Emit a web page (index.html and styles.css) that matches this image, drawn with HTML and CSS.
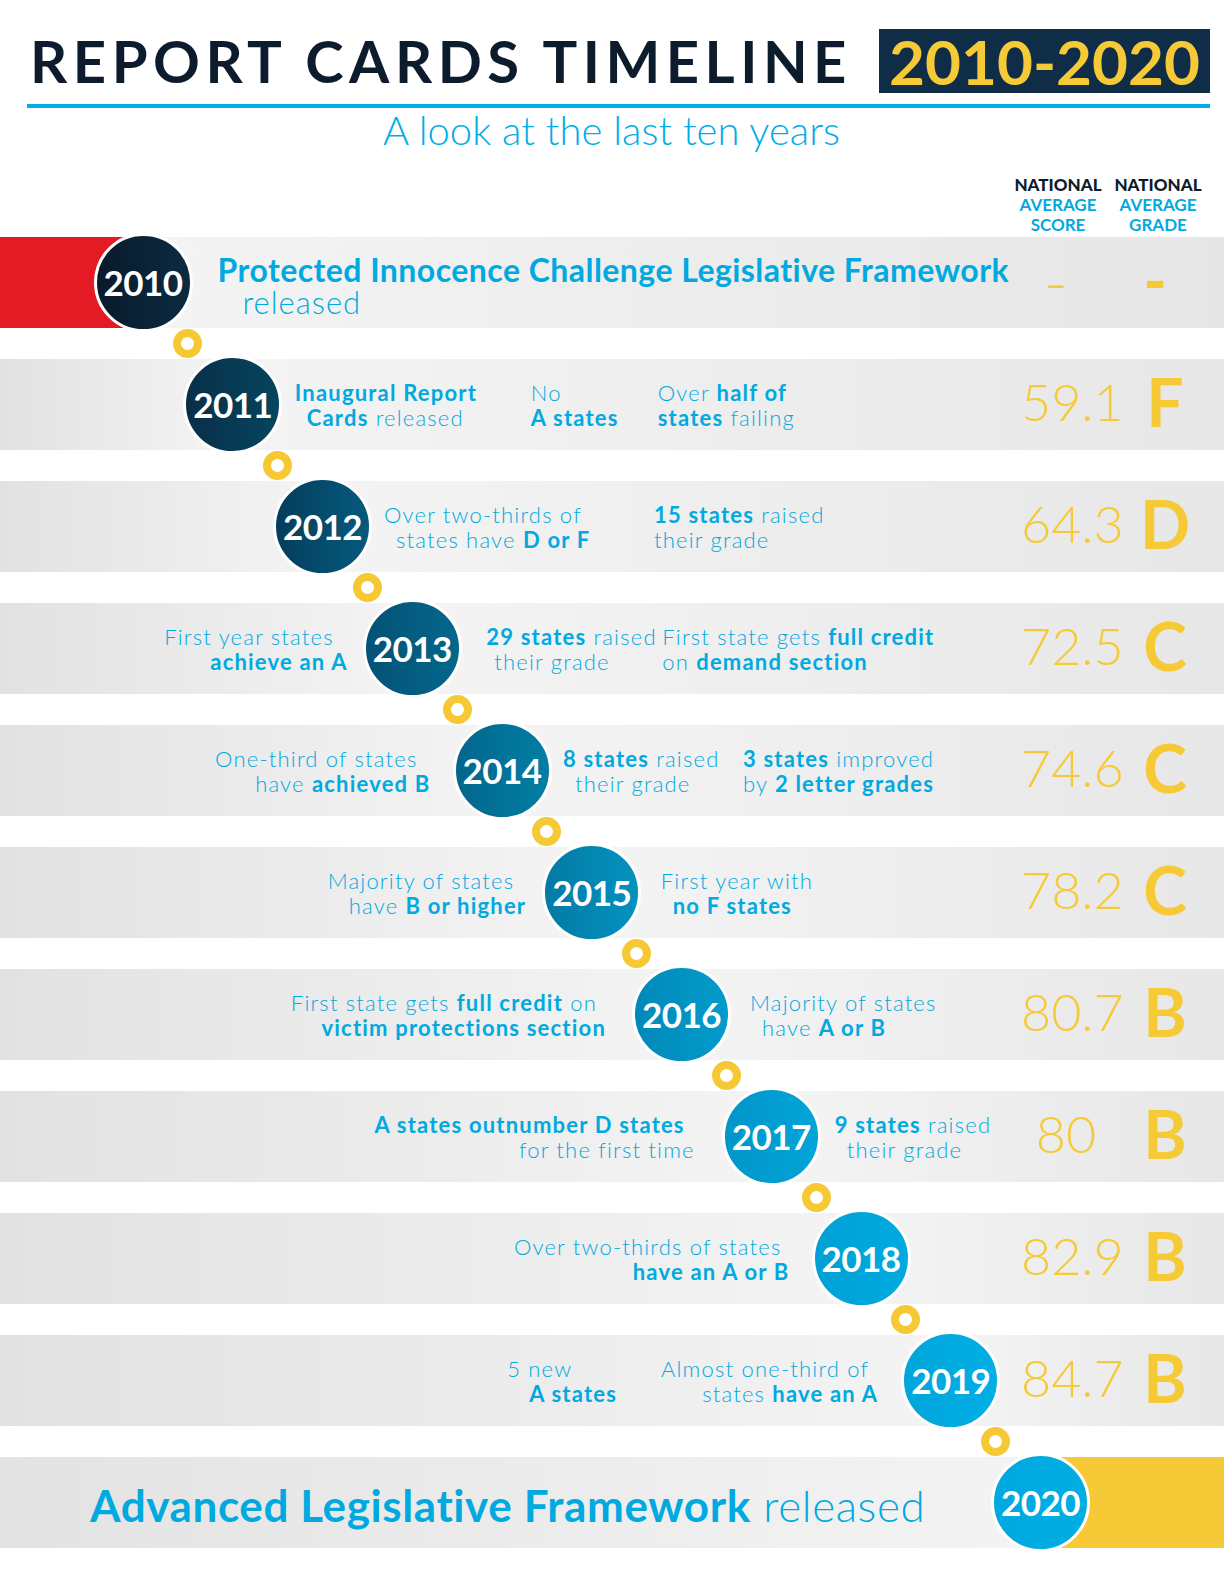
FILE: index.html
```html
<!DOCTYPE html>
<html lang="en">
<head>
<meta charset="utf-8">
<title>Report Cards Timeline 2010-2020</title>
<link rel="stylesheet" href="styles.css">
</head>
<body>
<div class="page">
  <header class="hdr">
    <div class="title-row">
      <h1 class="title">REPORT CARDS TIMELINE</h1>
      <div class="years">2010-2020</div>
    </div>
    <div class="rule"></div>
    <p class="sub">A look at the last ten years</p>
    <div class="colheads">
      <div class="ch"><b>NATIONAL</b><span>AVERAGE</span><span>SCORE</span></div>
      <div class="ch"><b>NATIONAL</b><span>AVERAGE</span><span>GRADE</span></div>
    </div>
  </header>

  <main class="timeline">
    <div class="row y2010">
      <div class="left"></div>
      <div class="dot">2010</div>
      <div class="right">
        <div class="head-blk">
          <span class="h1l"><b>Protected Innocence Challenge Legislative Framework</b></span>
          <span class="h2l">released</span>
        </div>
      </div>
      <div class="score dash">–</div>
      <div class="grade gdash">-</div>
    </div>
    <div class="link y2010"><span class="ring"></span></div>

    <div class="row y2011">
      <div class="left"></div>
      <div class="dot">2011</div>
      <div class="right">
        <div class="blk ind b1"><span class="ln"><b>Inaugural Report</b></span><span class="ln"><b>Cards</b> released</span></div>
        <div class="blk b2"><span class="ln">No</span><span class="ln"><b>A states</b></span></div>
        <div class="blk"><span class="ln">Over <b>half of</b></span><span class="ln"><b>states</b> failing</span></div>
      </div>
      <div class="score">59.1</div>
      <div class="grade">F</div>
    </div>
    <div class="link y2011"><span class="ring"></span></div>

    <div class="row y2012">
      <div class="left"></div>
      <div class="dot">2012</div>
      <div class="right">
        <div class="blk ind b1"><span class="ln">Over two-thirds of</span><span class="ln">states have <b>D or F</b></span></div>
        <div class="blk"><span class="ln"><b>15 states</b> raised</span><span class="ln">their grade</span></div>
      </div>
      <div class="score">64.3</div>
      <div class="grade">D</div>
    </div>
    <div class="link y2012"><span class="ring"></span></div>

    <div class="row y2013">
      <div class="left">
        <div class="blk rt"><span class="ln">First year states</span><span class="ln"><b>achieve an A</b></span></div>
      </div>
      <div class="dot">2013</div>
      <div class="right">
        <div class="blk ind b1"><span class="ln"><b>29 states</b> raised</span><span class="ln">their grade</span></div>
        <div class="blk"><span class="ln">First state gets <b>full credit</b></span><span class="ln">on <b>demand section</b></span></div>
      </div>
      <div class="score">72.5</div>
      <div class="grade">C</div>
    </div>
    <div class="link y2013"><span class="ring"></span></div>

    <div class="row y2014">
      <div class="left">
        <div class="blk rt"><span class="ln">One-third of states</span><span class="ln">have <b>achieved B</b></span></div>
      </div>
      <div class="dot">2014</div>
      <div class="right">
        <div class="blk ind b1"><span class="ln"><b>8 states</b> raised</span><span class="ln">their grade</span></div>
        <div class="blk"><span class="ln"><b>3 states</b> improved</span><span class="ln">by <b>2 letter grades</b></span></div>
      </div>
      <div class="score">74.6</div>
      <div class="grade">C</div>
    </div>
    <div class="link y2014"><span class="ring"></span></div>

    <div class="row y2015">
      <div class="left">
        <div class="blk rt"><span class="ln">Majority of states</span><span class="ln">have <b>B or higher</b></span></div>
      </div>
      <div class="dot">2015</div>
      <div class="right">
        <div class="blk ind"><span class="ln">First year with</span><span class="ln"><b>no F states</b></span></div>
      </div>
      <div class="score">78.2</div>
      <div class="grade">C</div>
    </div>
    <div class="link y2015"><span class="ring"></span></div>

    <div class="row y2016">
      <div class="left">
        <div class="blk rt"><span class="ln">First state gets <b>full credit</b> on</span><span class="ln"><b>victim protections section</b></span></div>
      </div>
      <div class="dot">2016</div>
      <div class="right">
        <div class="blk ind"><span class="ln">Majority of states</span><span class="ln">have <b>A or B</b></span></div>
      </div>
      <div class="score">80.7</div>
      <div class="grade">B</div>
    </div>
    <div class="link y2016"><span class="ring"></span></div>

    <div class="row y2017">
      <div class="left">
        <div class="blk rt"><span class="ln"><b>A states outnumber D states</b></span><span class="ln">for the first time</span></div>
      </div>
      <div class="dot">2017</div>
      <div class="right">
        <div class="blk ind"><span class="ln"><b>9 states</b> raised</span><span class="ln">their grade</span></div>
      </div>
      <div class="score">80</div>
      <div class="grade">B</div>
    </div>
    <div class="link y2017"><span class="ring"></span></div>

    <div class="row y2018">
      <div class="left">
        <div class="blk rt"><span class="ln">Over two-thirds of states</span><span class="ln"><b>have an A or B</b></span></div>
      </div>
      <div class="dot">2018</div>
      <div class="right"></div>
      <div class="score">82.9</div>
      <div class="grade">B</div>
    </div>
    <div class="link y2018"><span class="ring"></span></div>

    <div class="row y2019">
      <div class="left">
        <div class="blk ind2"><span class="ln">5 new</span><span class="ln"><b>A states</b></span></div>
        <div class="blk rt"><span class="ln">Almost one-third of</span><span class="ln">states <b>have an A</b></span></div>
      </div>
      <div class="dot">2019</div>
      <div class="right"></div>
      <div class="score">84.7</div>
      <div class="grade">B</div>
    </div>
    <div class="link y2019"><span class="ring"></span></div>

    <div class="row y2020">
      <div class="left">
        <div class="final"><b>Advanced Legislative Framework</b> released</div>
      </div>
      <div class="dot">2020</div>
    </div>
  </main>
</div>
</body>
</html>
```

FILE: styles.css
```css
* { box-sizing: border-box; }

body {
  margin: 0;
  background: #ffffff;
  font-family: Lato, "Noto Sans", "Liberation Sans", sans-serif;
}

.page {
  width: 1224px;
  padding-bottom: 20px;
}

/* ---------- header ---------- */
.hdr {
  padding: 29px 14px 0 27px;
}

.title-row {
  display: flex;
  justify-content: space-between;
  align-items: center;
  height: 64px;
}

.title {
  margin: 0 0 0 3px;
  font-size: 58px;
  font-weight: 700;
  letter-spacing: 5.5px;
  line-height: 1;
  color: #0c1c2d;
}

.years {
  width: 331px;
  height: 64px;
  background: #102d47;
  color: #f6c937;
  font-size: 62px;
  font-weight: 700;
  line-height: 1;
  display: flex;
  align-items: center;
  justify-content: center;
}

.rule {
  height: 4px;
  margin-top: 11px;
  background: #00ade6;
}

.sub {
  margin: 0;
  padding-right: 14px;
  height: 44px;
  line-height: 44px;
  text-align: center;
  font-size: 40px;
  font-weight: 300;
  color: #00ade6;
}

.colheads {
  display: flex;
  justify-content: flex-end;
  padding-right: 2px;
  margin-top: 23px;
}

.ch {
  width: 100px;
  display: flex;
  flex-direction: column;
  align-items: center;
  font-size: 17px;
  font-weight: 700;
  line-height: 20px;
  color: #00a9e0;
}

.ch b { color: #0c1c2d; }

/* ---------- timeline ---------- */
.timeline {
  margin-top: 2px;
}

.y2010 { --i: 0;  --c1: #0a1a2b; --c2: #0a2b42; }
.y2011 { --i: 1;  --c1: #0a2e48; --c2: #04455f; }
.y2012 { --i: 2;  --c1: #053d5c; --c2: #045a7d; }
.y2013 { --i: 3;  --c1: #045176; --c2: #03688b; }
.y2014 { --i: 4;  --c1: #03668c; --c2: #027ea4; }
.y2015 { --i: 5;  --c1: #047aa4; --c2: #0392bf; }
.y2016 { --i: 6;  --c1: #0388b8; --c2: #029ccc; }
.y2017 { --i: 7;  --c1: #0295c8; --c2: #01a4d9; }
.y2018 { --i: 8;  --c1: #019fd4; --c2: #00abe0; }
.y2019 { --i: 9;  --c1: #00a6dc; --c2: #00afe4; }
.y2020 { --i: 10; --c1: #00a9df; --c2: #00aee4; }

.row, .link {
  --cx: calc(143px + 89.75px * var(--i));
}

.row {
  height: 91px;
  display: flex;
  align-items: center;
  background: linear-gradient(90deg, #e2e2e2 0px, #f4f4f4 var(--cx), #e7e7e7 100%);
  color: #00a9e0;
  font-size: 22px;
  font-weight: 300;
  line-height: 25px;
  letter-spacing: 1.2px;
}

.row b { font-weight: 700; }

.row.y2010 {
  background:
    linear-gradient(90deg, #e41b24 0, #e41b24 var(--cx), transparent var(--cx)),
    linear-gradient(90deg, #f4f4f4 0px, #f4f4f4 var(--cx), #e6e6e6 100%);
}

.row.y2020 {
  background:
    linear-gradient(90deg, transparent 0, transparent var(--cx), #f6c936 var(--cx)),
    linear-gradient(90deg, #e3e3e3 0px, #f4f4f4 var(--cx));
}

.left {
  flex: none;
  width: calc(var(--cx) - 49.5px);
  display: flex;
  justify-content: flex-end;
  align-items: center;
  gap: 44px;
  padding-right: var(--lp, 22px);
}

.dot {
  flex: none;
  width: 99px;
  height: 99px;
  border: 3px solid #ffffff;
  border-radius: 50%;
  background: linear-gradient(90deg, var(--c1), var(--c2));
  color: #ffffff;
  font-size: 35px;
  font-weight: 700;
  letter-spacing: -0.5px;
  line-height: 1;
  display: flex;
  align-items: center;
  justify-content: center;
  position: relative;
  z-index: 1;
}

.right {
  flex: 1;
  min-width: 0;
  display: flex;
  align-items: center;
  padding-left: var(--rp, 14px);
}

.blk {
  flex: none;
  display: flex;
  flex-direction: column;
  white-space: nowrap;
  padding-top: 1px;
}

.blk .ln { display: block; }
.blk.ind .ln + .ln { padding-left: 12px; }
.blk.ind2 .ln + .ln { padding-left: 22px; }
.blk.rt { text-align: right; }
.blk.rt .ln:first-child { padding-right: var(--o, 10px); }

.score {
  flex: none;
  width: 96px;
  padding-right: 6px;
  text-align: center;
  font-size: 52px;
  font-weight: 300;
  letter-spacing: 0;
  line-height: 1;
  color: #f6c936;
  margin-bottom: 7px;
}

.grade {
  flex: none;
  width: 96px;
  margin-right: 11px;
  text-align: center;
  font-size: 66px;
  font-weight: 700;
  letter-spacing: 0;
  line-height: 1;
  color: #f6c936;
  margin-bottom: 6px;
}

.score.dash {
  font-size: 38px;
  font-weight: 400;
  padding-right: 26px;
  margin-bottom: 0;
}

.grade.gdash {
  font-size: 62px;
  font-weight: 900;
  padding-right: 20px;
}

/* row-specific spacing */
.y2010 .right { --rp: 25px; }
.head-blk {
  display: flex;
  flex-direction: column;
  white-space: nowrap;
  font-size: 31px;
  line-height: 32px;
  padding-top: 6px;
}
.head-blk .h1l { font-size: 32px; letter-spacing: 0.45px; }
.head-blk .h2l { padding-left: 25px; letter-spacing: 1px; }

.y2011 .right { --rp: 12.5px; }
.y2011 .b1 { width: 236px; }
.y2011 .b2 { width: 127px; }

.y2012 .right { --rp: 12px; }
.y2012 .b1 { width: 270px; }

.y2013 .left { --lp: 15px; --o: 14px; }
.y2013 .right { --rp: 24.5px; }
.y2013 .b1 { width: 176px; }
.y2013 .blk.ind .ln + .ln { padding-left: 8px; }

.y2014 .left { --lp: 22px; --o: 13px; }
.y2014 .right { --rp: 11.5px; }
.y2014 .b1 { width: 180px; }

.y2015 .left { --lp: 16px; --o: 12px; }
.y2015 .right { --rp: 19.5px; }

.y2016 .left { --lp: 26px; --o: 9px; }
.y2016 .right { --rp: 19px; }

.y2017 .left { --lp: 27px; --o: 10px; }
.y2017 .right { --rp: 14px; }

.y2018 .left { --lp: 22px; --o: 8px; }

.y2019 .left { --lp: 23px; --o: 9px; }

.y2020 .left {
  justify-content: flex-start;
  padding-left: 90px;
  padding-right: 0;
}

.final {
  white-space: nowrap;
  font-size: 44px;
  letter-spacing: 0.6px;
  line-height: 1;
  padding-top: 4px;
}

/* connector rings */
.link {
  height: 31px;
  display: flex;
  align-items: center;
}

.ring {
  display: block;
  margin-left: calc(var(--cx) + 44.9px - 14.5px);
  width: 29px;
  height: 29px;
  border: 8.5px solid #f6c833;
  border-radius: 50%;
}
```
